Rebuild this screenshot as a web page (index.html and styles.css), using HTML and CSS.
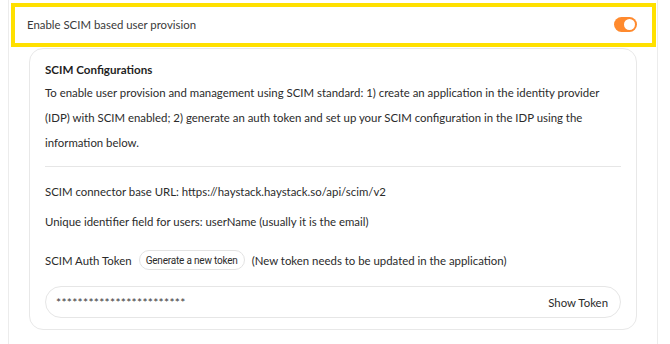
FILE: index.html
```html
<!DOCTYPE html>
<html lang="en">
<head>
  <meta charset="UTF-8" />
  <title>SCIM Settings</title>
  <link rel="stylesheet" href="styles.css">
</head>
<body>
  <div class="panel">
    <div class="enable-row">
      <span>Enable SCIM based user provision</span>
      <span class="toggle on"><span class="knob"></span></span>
    </div>

    <div class="scim-card">
      <h3>SCIM Configurations</h3>
      <p class="intro">To enable user provision and management using SCIM standard: 1) create an application in the identity provider (IDP) with SCIM enabled; 2) generate an auth token and set up your SCIM configuration in the IDP using the information below.</p>
      <hr />
      <p class="info url">SCIM connector base URL: https://haystack.haystack.so/api/scim/v2</p>
      <p class="info">Unique identifier field for users: userName (usually it is the email)</p>
      <div class="token-row">
        <span>SCIM Auth Token</span>
        <button class="gen-btn">Generate a new token</button>
        <span>(New token needs to be updated in the application)</span>
      </div>
      <div class="token-box">
        <span class="stars">************************</span>
        <span class="show">Show Token</span>
      </div>
    </div>
  </div>
</body>
</html>
```

FILE: styles.css
```css
* { margin: 0; padding: 0; box-sizing: border-box; }

body {
  font-family: 'Lato', sans-serif;
  font-size: 11.4px;
  color: #2b2b2b;
  background: #fff;
  overflow: hidden;
}

.panel {
  margin: 0 12px 0 8px;
  height: 100vh;
  border-left: 1px solid #ececec;
  border-right: 1px solid #ececec;
  padding: 3px 0 0 0;
}

.enable-row {
  margin: 0 1px 0 2px;
  height: 44px;
  border: 4px solid #ffe000;
  display: flex;
  align-items: center;
  justify-content: space-between;
  padding: 0 15px 2px 12px;
  color: #3a3a3a;
}

.toggle {
  width: 23px;
  height: 15px;
  border-radius: 8px;
  background: #ff8a2e;
  display: flex;
  align-items: center;
  padding: 0 2px;
}

.toggle.on { justify-content: flex-end; }

.knob {
  width: 11px;
  height: 11px;
  border-radius: 50%;
  background: #fff;
}

.scim-card {
  margin: 1px 20px 0 20px;
  border: 1px solid #e8e8e8;
  border-radius: 14px;
  padding: 11px 15px 11px 15px;
}

.scim-card h3 {
  font-size: 11.6px;
  font-weight: 700;
  line-height: 20px;
  color: #1f1f1f;
}

.intro {
  line-height: 25px;
}

.scim-card hr {
  border: none;
  border-top: 1px solid #e6e6e6;
  margin-top: 11px;
}

.info {
  line-height: 20px;
  margin-top: 10px;
}

.info.url { margin-top: 15px; }

.token-row {
  margin-top: 16px;
  height: 24px;
  display: flex;
  align-items: center;
  gap: 7px;
}

.gen-btn {
  font-family: 'Roboto', sans-serif;
  font-size: 10px;
  letter-spacing: -0.2px;
  color: #2b2b2b;
  background: #fff;
  border: 1px solid #e3e3e3;
  border-radius: 10px;
  height: 20px;
  padding: 0 6px;
  margin-left: 0;
}

.token-box {
  margin-top: 14px;
  height: 32px;
  border: 1px solid #e6e6e6;
  border-radius: 16px;
  display: flex;
  align-items: center;
  justify-content: space-between;
  padding: 0 12px 0 10px;
}

.stars {
  font-size: 12px;
  letter-spacing: 0.3px;
  color: #3a3a3a;
}

.show { color: #2b2b2b; }
```
